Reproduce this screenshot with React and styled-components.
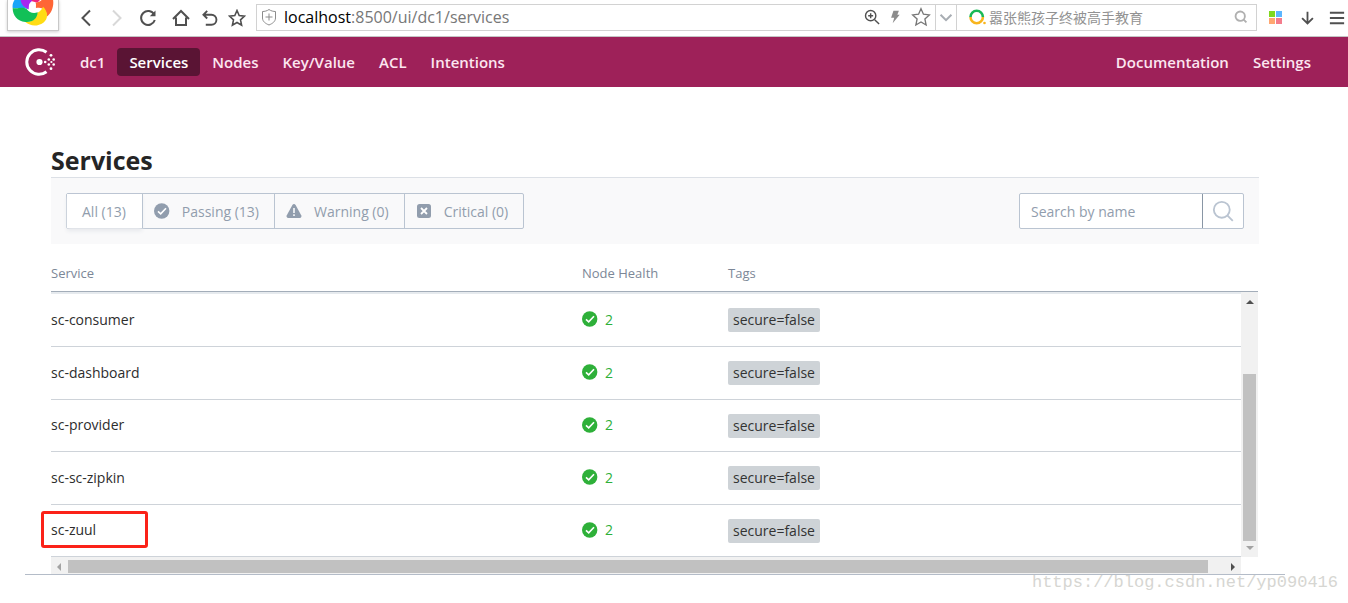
import styled, { createGlobalStyle } from 'styled-components';

const filters = [
  { id: 'all', label: 'All (13)' },
  { id: 'passing', label: 'Passing (13)', icon: 'check' },
  { id: 'warning', label: 'Warning (0)', icon: 'warning' },
  { id: 'critical', label: 'Critical (0)', icon: 'cross' },
];

const services = [
  { name: 'sc-consumer', passing: 2, tag: 'secure=false' },
  { name: 'sc-dashboard', passing: 2, tag: 'secure=false' },
  { name: 'sc-provider', passing: 2, tag: 'secure=false' },
  { name: 'sc-sc-zipkin', passing: 2, tag: 'secure=false' },
  { name: 'sc-zuul', passing: 2, tag: 'secure=false', marked: true },
];

const BrowserLogo = () => (
  <svg width="50" height="30" viewBox="24 0 150 90" aria-hidden="true">
    <path d="M38 24C36 8 44-4 56-12L70-8C64 8 70 18 86 28 66 20 54 26 38 24Z" fill="#18a5f8" />
    <path d="M62-12H112C108 2 92 0 87 14L86 28C66 20 60 6 62-12Z" fill="#a628f0" />
    <path d="M92-12H132L112 8 96 4Z" fill="#f0257c" />
    <path
      d="M106 8C122 6 130-2 130-12H156C165 10 158 38 140 50 141 34 132 20 108 24Z"
      fill="#ff6636"
    />
    <path
      d="M112 38C120 34 126 28 129 20 144 34 146 56 130 68 112 80 92 79 76 66 98 66 110 54 112 38Z"
      fill="#ffdc14"
    />
    <path
      d="M38 24C54 28 66 18 80 27 88 38 100 42 113 37 112 56 98 68 76 66 52 64 38 46 38 24Z"
      fill="#12c057"
    />
    <circle cx="99" cy="15" r="9" fill="#fff" />
  </svg>
);

const Line = ({ size = 18, width = 2, children }) => (
  <svg
    width={size}
    height={size}
    viewBox="0 0 18 18"
    fill="none"
    stroke="currentColor"
    strokeWidth={width}
    aria-hidden="true"
  >
    {children}
  </svg>
);

const StarPath = () => (
  <path d="M9 1.5l2.2 5 5.3.6-4 3.7 1.1 5.4L9 13.5l-4.6 2.7 1.1-5.4-4-3.7 5.3-.6z" />
);

const ConsulLogo = () => (
  <svg width="31" height="30" viewBox="0 0 31 30" fill="#fff" aria-hidden="true">
    <path
      d="M21.5 5.2A12.3 12.3 0 1 0 21.5 24.8"
      fill="none"
      stroke="#fff"
      strokeWidth="3"
    />
    <circle cx="14.5" cy="15" r="3.1" />
    <circle cx="20.2" cy="15" r="1.3" />
    <circle cx="23.8" cy="12.5" r="1.3" />
    <circle cx="23.8" cy="17.5" r="1.3" />
    <circle cx="26" cy="8.3" r="1.4" />
    <circle cx="26" cy="21.7" r="1.4" />
    <circle cx="26.4" cy="15" r="1.1" />
    <circle cx="28.7" cy="12.5" r="1.3" />
    <circle cx="28.7" cy="17.5" r="1.3" />
  </svg>
);

const StatusIcon = ({ type }) => (
  <svg width="16" height="16" viewBox="0 0 16 16" aria-hidden="true">
    {type === 'check' && (
      <>
        <circle cx="7.7" cy="8" r="7.7" fill="currentColor" />
        <path d="M4 8.3l2.7 2.6L12 5.2" fill="none" stroke="#fff" strokeWidth="1.6" />
      </>
    )}
    {type === 'warning' && (
      <>
        <path
          d="M6.4 2C7.2.6 8.8.6 9.6 2l5.6 10.3c.7 1.3 0 2.7-1.5 2.7H2.3C.8 15 .1 13.6.8 12.3z"
          fill="currentColor"
        />
        <path d="M8 5v5M8 11.3V13" stroke="#fff" strokeWidth="1.5" />
      </>
    )}
    {type === 'cross' && (
      <>
        <rect x="1" y="1" width="14" height="14" rx="2.5" fill="currentColor" />
        <path d="M5 5l6 6M11 5l-6 6" stroke="#fff" strokeWidth="1.8" />
      </>
    )}
  </svg>
);

const Arrow = ({ turn = 0 }) => (
  <svg width="8" height="8" viewBox="0 0 8 8" aria-hidden="true">
    <path d="M0 6h8L4 2z" fill="currentColor" transform={`rotate(${turn} 4 4)`} />
  </svg>
);

const BrowserBar = () => (
  <Toolbar>
    <LogoTile>
      <BrowserLogo />
    </LogoTile>
    <NavButtons>
      <IconButton aria-label="Back">
        <Line><path d="M12 1.5L4.5 9l7.5 7.5" /></Line>
      </IconButton>
      <IconButton aria-label="Forward" disabled>
        <Line><path d="M6 1.5L13.5 9 6 16.5" /></Line>
      </IconButton>
      <IconButton aria-label="Reload">
        <Line>
          <path d="M15.2 5.5A7 7 0 1 0 15.8 11" />
          <path d="M16.5 1.5v5.7h-5.7z" fill="currentColor" stroke="none" />
        </Line>
      </IconButton>
      <IconButton aria-label="Home">
        <Line><path d="M1 10L9 2l8 8M4 8.5V16h10V8.5" /></Line>
      </IconButton>
      <IconButton aria-label="Undo">
        <Line size={17}><path d="M5.5 1l-4 4 4 4M1.5 5H10a5.3 5.3 0 0 1 0 10.600H4" /></Line>
      </IconButton>
      <IconButton aria-label="Favourites">
        <Line width={1.6}><StarPath /></Line>
      </IconButton>
    </NavButtons>
    <AddressBar>
      <Line width={1}>
        <path d="M9 1.500C7 3 4.500 3.500 2.500 3.500V10c0 3.500 3 5.500 6.500 7 3.500-1.500 6.500-3.500 6.500-7V3.500C13.500 3.500 11 3 9 1.500zM9 5.500v7M5.500 9h7" />
      </Line>
      <Url>
        <b>localhost</b>:8500/ui/dc1/services
      </Url>
      <AddressActions>
        <IconButton aria-label="Zoom">
          <Line size={16} width={1.6}>
            <circle cx="7.500" cy="7.500" r="5.800" />
            <path d="M12 12l5 5M7.500 4.700v5.600M4.700 7.500h5.600" />
          </Line>
        </IconButton>
        <IconButton aria-label="Fast mode" $tone="#8c8c8c">
          <Line size={14}>
            <path d="M7 1h7l-2 5h3L6 17l2-7H4z" fill="currentColor" stroke="none" />
          </Line>
        </IconButton>
        <IconButton aria-label="Add bookmark" $tone="#777">
          <Line size={20} width={1.2}><StarPath /></Line>
        </IconButton>
        <DropButton aria-label="History">
          <Line size={14} width={2.6}><path d="M2 6l7 7 7-7" /></Line>
        </DropButton>
      </AddressActions>
      <WebSearch>
        <svg width="17" height="16" viewBox="0 0 17 16" fill="none" strokeWidth="2.6" aria-hidden="true">
          <path d="M1.500 8a6.200 6.200 0 0 1 12.400 0" stroke="#19b955" />
          <path d="M1.500 8a6.200 6.200 0 0 0 12.400 0" stroke="#f8b51e" />
          <circle cx="15.500" cy="14" r="1.300" fill="#f8b51e" />
        </svg>
        <input aria-label="Web search" placeholder="嚣张熊孩子终被高手教育" />
        <Line size={14} width={2.4}>
          <circle cx="8" cy="8" r="6" />
          <path d="M12 12l4 4" />
        </Line>
      </WebSearch>
    </AddressBar>
    <Tools>
      <IconButton aria-label="Apps">
        <svg width="14" height="14" viewBox="0 0 14 14" aria-hidden="true">
          <path d="M0 0h6v6H0z" fill="#7fd81f" />
          <path d="M7 0h6v6H7z" fill="#5cb6ff" />
          <path d="M0 7h6v6H0z" fill="#ffa771" />
          <path d="M7 7h6v6H7z" fill="#f47c8c" />
        </svg>
      </IconButton>
      <IconButton aria-label="Downloads">
        <Line size={15} width={2.2}><path d="M9 1v14M2.500 8.500L9 15l6.500-6.500" /></Line>
      </IconButton>
      <IconButton aria-label="Menu">
        <Line size={16} width={2.2}><path d="M1 3h16M1 9h16M1 15h16" /></Line>
      </IconButton>
    </Tools>
  </Toolbar>
);

const App = () => (
  <Page>
    <GlobalStyle />
    <BrowserBar />
    <Header>
      <Brand href="#" aria-label="Consul">
        <ConsulLogo />
      </Brand>
      <Nav>
        <NavLink href="#">dc1</NavLink>
        <NavLink href="#" $active>Services</NavLink>
        <NavLink href="#">Nodes</NavLink>
        <NavLink href="#">Key/Value</NavLink>
        <NavLink href="#">ACL</NavLink>
        <NavLink href="#">Intentions</NavLink>
      </Nav>
      <Nav>
        <NavLink href="#">Documentation</NavLink>
        <NavLink href="#">Settings</NavLink>
      </Nav>
    </Header>
    <Main>
      <Title>Services</Title>
      <FilterBar>
        <FilterGroup>
          {filters.map(({ id, label, icon }) => (
            <Filter key={id}>
              <input type="radio" name="status" value={id} defaultChecked={id === 'all'} />
              {icon && <StatusIcon type={icon} />}
              <span>{label}</span>
            </Filter>
          ))}
        </FilterGroup>
        <Search>
          <input type="text" aria-label="Search by name" placeholder="Search by name" />
          <button aria-label="Search">
            <Line size={22} width={1.5}>
              <circle cx="8" cy="8" r="6.500" />
              <path d="M12.500 12.500L17 17" />
            </Line>
          </button>
        </Search>
      </FilterBar>
      <Listing>
        <Table>
          <thead>
            <tr>
              <th>Service</th>
              <th>Node Health</th>
              <th>Tags</th>
            </tr>
          </thead>
          <tbody>
            {services.map(({ name, passing, tag, marked }) => (
              <tr key={name}>
                <td>
                  <Name href="#">
                    {name}
                    {marked && <Mark />}
                  </Name>
                </td>
                <td>
                  <Health>
                    <StatusIcon type="check" />
                    {passing}
                  </Health>
                </td>
                <td>
                  <Tag>{tag}</Tag>
                </td>
              </tr>
            ))}
          </tbody>
        </Table>
        <Side>
          <SideHead />
          <VerticalBar>
            <Arrow />
            <VerticalThumb />
            <Arrow turn={180} />
          </VerticalBar>
        </Side>
      </Listing>
      <HorizontalBar>
        <Arrow turn={-90} />
        <HorizontalThumb />
        <Arrow turn={90} />
      </HorizontalBar>
    </Main>
    <Footer />
    <Watermark>https://blog.csdn.net/yp090416</Watermark>
  </Page>
);

export default App;

const GlobalStyle = createGlobalStyle`
  * {
    box-sizing: border-box;
  }
  body {
    margin: 0;
    background: #fff;
  }
  body, input, button {
    font-family: "Open Sans", "Noto Sans CJK SC", sans-serif;
  }
  a {
    color: inherit;
    text-decoration: none;
  }
  svg {
    display: block;
    flex: none;
  }
`;

const Page = styled.div`
  position: relative;
  padding-bottom: 28px;
`;

const Toolbar = styled.div`
  display: flex;
  align-items: center;
  height: 37px;
  padding-left: 7px;
  border-bottom: 1px solid #c4c4c4;
`;

const LogoTile = styled.div`
  align-self: flex-start;
  width: 52px;
  height: 31px;
  overflow: hidden;
  border: 1px solid #c8c8c8;
  border-top: 0;
  box-shadow: 0 1px 3px #d0d0d0;
`;

const NavButtons = styled.div`
  display: grid;
  grid-template-columns: 28px 30px 34px 32px 26px 28px;
  margin: 0 5px 0 14px;
`;

const IconButton = styled.button`
  display: flex;
  align-items: center;
  justify-content: center;
  padding: 0;
  border: 0;
  background: none;
  color: ${({ $tone }) => $tone || '#505050'};

  &:disabled {
    color: #d8d8d8;
  }
`;

const AddressBar = styled.div`
  display: flex;
  flex: 1;
  align-items: center;
  height: 27px;
  margin-bottom: 2px;
  padding-left: 3px;
  border: 1px solid #d2d2d2;
  color: #8c8c8c;
`;

const Url = styled.span`
  flex: 1;
  margin-left: 6px;
  font-size: 16px;
  line-height: 24px;
  color: #777;

  b {
    font-weight: 400;
    color: #000;
  }
`;

const AddressActions = styled.div`
  display: grid;
  grid-template-columns: 22px 24px 28px 22px;
  align-self: stretch;
`;

const DropButton = styled(IconButton)`
  border: solid #d2d2d2;
  border-width: 0 1px;
  color: #a8adb3;
`;

const WebSearch = styled.div`
  display: flex;
  align-items: center;
  width: 299px;
  padding: 0 8px 0 12px;
  color: #b0b0b0;

  input {
    flex: 1;
    min-width: 0;
    padding: 0 3px;
    border: 0;
    font-size: 14px;
    outline: 0;
  }
  input::placeholder {
    color: #929292;
  }
`;

const Tools = styled.div`
  display: grid;
  grid-template-columns: 37px 26px 28px;

  button:last-child {
    justify-content: flex-end;
    padding-right: 3px;
  }
`;

const Header = styled.header`
  display: flex;
  align-items: center;
  height: 50px;
  padding: 0 25px;
  background: #9e2159;
  color: #fce6f0;
`;

const Brand = styled.a`
  margin-right: 12px;
`;

const Nav = styled.nav`
  display: flex;

  & + & {
    margin-left: auto;
  }
`;

const NavLink = styled.a`
  padding: 0 12px;
  border-radius: 4px;
  background: ${({ $active }) => ($active ? '#5a1434' : 'transparent')};
  color: ${({ $active }) => ($active ? '#fff' : 'inherit')};
  font-size: 15px;
  font-weight: 600;
  line-height: 28px;
`;

const Main = styled.main`
  padding: 56px 89px 0 51px;
`;

const Title = styled.h1`
  margin: 0;
  border-bottom: 1px solid #dce0e6;
  color: #252525;
  font-size: 25px;
  line-height: 34px;
`;

const FilterBar = styled.div`
  display: flex;
  justify-content: space-between;
  padding: 15px;
  background: #f9f9fa;
`;

const FilterGroup = styled.div`
  display: flex;
  height: 36px;
  border: 1px solid #bac4d1;
  border-radius: 2px;
`;

const Filter = styled.label`
  display: flex;
  gap: 12px;
  align-items: center;
  padding: 0 15px 0 11px;
  color: #919dad;
  font-size: 14px;

  & + & {
    border-left: 1px solid #bac4d1;
  }
  &:first-child {
    padding: 0 16px 0 15px;
  }
  &:has(:checked) {
    background: #fff;
    box-shadow: 0 3px 4px #e6e8ec;
  }
  input {
    position: absolute;
    opacity: 0;
  }
`;

const Search = styled.div`
  display: flex;
  width: 225px;
  height: 36px;
  border: 1px solid #bac4d1;
  border-radius: 2px;
  background: #fff;

  input {
    flex: 1;
    min-width: 0;
    padding: 0 11px;
    border: 0;
    background: none;
    font-size: 14px;
    outline: 0;
  }
  input::placeholder {
    color: #919dad;
  }
  button {
    display: grid;
    place-items: center;
    width: 41px;
    padding: 0;
    border: 0;
    border-left: 1px solid #8996a5;
    background: none;
    color: #bac4d1;
  }
`;

const Listing = styled.div`
  display: flex;
  margin-right: 1px;
`;

const Table = styled.table`
  flex: 1;
  border-collapse: separate;
  border-spacing: 0;
  table-layout: fixed;

  th {
    height: 48px;
    padding: 10px 0 0;
    border-bottom: 1px solid #a3adb9;
    color: #7c8797;
    font-size: 13px;
    font-weight: 400;
    text-align: left;
  }
  th:first-child {
    width: 531px;
  }
  th:nth-child(2) {
    width: 146px;
  }
  td {
    height: 52px;
    padding: 0;
    border-bottom: 1px solid #ced3d9;
    color: #333;
    font-size: 14px;
  }
  td:not(:last-child) {
    padding-bottom: 2px;
  }
  tr:nth-child(even) td {
    height: 53px;
  }
  tbody tr:first-child td {
    height: 55px;
    border-top: 2px solid #e6eaee;
  }
`;

const Name = styled.a`
  position: relative;
  color: #2d2d2d;
  font-weight: 500;
`;

const Mark = styled.span`
  position: absolute;
  top: -9px;
  left: -10px;
  width: 107px;
  height: 37px;
  border: 3px solid #fb2218;
  border-radius: 3px;
`;

const Health = styled.span`
  display: flex;
  gap: 7px;
  align-items: center;
  color: #2eb039;
`;

const Tag = styled.span`
  display: inline-block;
  padding: 0 5px;
  border-radius: 2px;
  background: #ced3d7;
  line-height: 24px;
`;

const Side = styled.div`
  display: flex;
  flex-direction: column;
  width: 17px;
`;

const SideHead = styled.div`
  height: 48px;
  border-bottom: 1px solid #a3adb9;
`;

const VerticalBar = styled.div`
  display: flex;
  flex: 1;
  flex-direction: column;
  align-items: center;
  padding: 6px 0 5px;
  background: #f1f1f1;
  color: #505050;

  svg:last-child {
    color: #a3a3a3;
  }
`;

const VerticalThumb = styled.div`
  flex: 1;
  width: 13px;
  margin: 68px 0 3px;
  background: #c1c1c1;
`;

const HorizontalBar = styled.div`
  display: flex;
  align-items: center;
  height: 17px;
  margin-right: 18px;
  padding: 2px 4px 0;
  background: #f1f1f1;
  color: #505050;

  svg:first-child {
    color: #a3a3a3;
  }
`;

const HorizontalThumb = styled.div`
  flex: 1;
  height: 13px;
  margin: 0 21px 0 5px;
  background: #c1c1c1;
`;

const Footer = styled.footer`
  margin: 0 63px 0 25px;
  border-top: 1px solid #b4bcc8;
`;

const Watermark = styled.span`
  position: absolute;
  right: 10px;
  bottom: 10px;
  color: #d6d6d2;
  font-family: "Liberation Mono", monospace;
  font-size: 17px;
  line-height: 20px;
`;
